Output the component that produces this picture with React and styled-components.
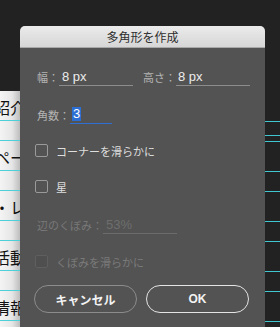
import styled, { createGlobalStyle } from "styled-components";

const GlobalStyle = createGlobalStyle`
  html, body {
    margin: 0;
    padding: 0;
    background: #222222;
    overflow: hidden;
  }
  body {
    font-family: "Liberation Sans", "Noto Sans CJK JP", sans-serif;
  }
`;

const Screen = styled.div`
  display: flex;
  width: 280px;
  height: 327px;
  overflow: hidden;
  background: #222222;
`;

// page peeking out behind the dialog on the left
const LeftStrip = styled.div`
  width: 20px;
  flex-shrink: 0;
  padding-top: 91px;
  overflow: hidden;
`;

const Page = styled.div`
  background: linear-gradient(to right, #f4f4f4 0%, #e6e6e6 60%, #bdbdbd 100%);
  height: 100%;
`;

const PageRow = styled.div`
  box-sizing: border-box;
  height: ${(p) => p.$h}px;
  border-bottom: 1px solid #4fd0d8;
  display: flex;
  align-items: center;
  padding-top: 3px;
  margin-left: -6px;
  font-family: "Noto Sans CJK JP", sans-serif;
  font-size: 16px;
  color: #111;
  white-space: nowrap;
  line-height: 1;
`;

const RightStrip = styled.div`
  flex: 1;
  overflow: hidden;
`;

const DarkRow = styled.div`
  box-sizing: border-box;
  height: ${(p) => p.$h}px;
  border-bottom: 1px solid #3fc6cf;
`;

const Dialog = styled.div`
  width: 245px;
  flex-shrink: 0;
  margin-top: 26px;
  background: #535353;
  border-radius: 5px 5px 0 0;
  display: flex;
  flex-direction: column;
`;

const TitleBar = styled.div`
  height: 21px;
  border-radius: 5px 5px 0 0;
  background: linear-gradient(to bottom, #ebebeb, #d6d6d6);
  border-bottom: 1px solid #a8a8a8;
  display: flex;
  align-items: center;
  justify-content: center;
  font-family: "Noto Sans CJK JP", sans-serif;
  font-size: 12px;
  color: #2e2e2e;
`;

const Body = styled.div`
  padding: 0 16px 0 17px;
  display: flex;
  flex-direction: column;
`;

const Row = styled.div`
  display: flex;
  align-items: flex-end;
  margin-top: ${(p) => p.$mt}px;
  gap: ${(p) => p.$gap || 0}px;
`;

const FieldGroup = styled.div`
  display: flex;
  align-items: flex-end;
`;

const Label = styled.span`
  font-family: "Noto Sans CJK JP", sans-serif;
  font-size: 11px;
  line-height: 18px;
  color: ${(p) => (p.$disabled ? "#787878" : "#b4b4b4")};
  white-space: nowrap;
`;

const Field = styled.div`
  box-sizing: border-box;
  width: ${(p) => p.$w}px;
  height: 19px;
  padding: 0 0 0 ${(p) => p.$pl ?? 3}px;
  border-bottom: 1px solid
    ${(p) => (p.$focus ? "#2f6fd3" : p.$disabled ? "#6c6c6c" : "#8c8c8c")};
  display: flex;
  align-items: center;
  font-size: 13px;
  color: ${(p) => (p.$disabled ? "#6e6e6e" : "#ececec")};
`;

const Selected = styled.span`
  background: #2d6ed2;
  color: #ffffff;
  padding: 0 1px;
  line-height: 14px;
`;

const CheckRow = styled.label`
  display: flex;
  align-items: center;
  margin-top: ${(p) => p.$mt}px;
  margin-left: -2px;
  gap: 8px;
  height: 13px;
`;

const Box = styled.span`
  box-sizing: border-box;
  width: 13px;
  height: 13px;
  border-radius: 2px;
  border: 1px solid ${(p) => (p.$disabled ? "#5f5f5f" : "#9a9a9a")};
  background: ${(p) => (p.$disabled ? "#4f4f4f" : "transparent")};
`;

const CheckText = styled.span`
  font-family: "Noto Sans CJK JP", sans-serif;
  font-size: 11px;
  color: ${(p) => (p.$disabled ? "#7a7a7a" : "#dedede")};
`;

const Buttons = styled.div`
  display: flex;
  gap: 9px;
  margin-top: 17px;
  margin-left: -3px;
`;

const Button = styled.button`
  box-sizing: border-box;
  width: 103px;
  height: 28px;
  border-radius: 14px;
  background: transparent;
  border: 1px solid ${(p) => (p.$primary ? "#e4e4e4" : "#8c8c8c")};
  color: #f2f2f2;
  font-family: "Liberation Sans", "Noto Sans CJK JP", sans-serif;
  font-size: 12px;
  font-weight: 700;
  padding: 0;
`;

const leftRows = [
  { h: 30, t: "紹介" },
  { h: 20 },
  { h: 30, t: "ペー" },
  { h: 20 },
  { h: 30, t: "・レ" },
  { h: 20 },
  { h: 30, t: "活動" },
  { h: 20 },
  { h: 30, t: "情報" },
  { h: 20 },
];

const rightLines = [121, 135, 141, 171, 191, 221, 241, 271, 291, 321];

export default function App() {
  return (
    <>
      <GlobalStyle />
      <Screen>
        <LeftStrip>
          <Page>
            {leftRows.map((r, i) => (
              <PageRow key={i} $h={r.h}>
                {r.t}
              </PageRow>
            ))}
          </Page>
        </LeftStrip>

        <Dialog>
          <TitleBar>多角形を作成</TitleBar>
          <Body>
            <Row $mt={19} $gap={10}>
              <FieldGroup>
                <Label>幅：</Label>
                <Field $w={74}>8 px</Field>
              </FieldGroup>
              <FieldGroup>
                <Label>高さ：</Label>
                <Field $w={74} $pl={2}>8 px</Field>
              </FieldGroup>
            </Row>
            <Row $mt={19}>
              <FieldGroup>
                <Label>角数：</Label>
                <Field $w={42} $pl={2} $focus>
                  <Selected>3</Selected>
                </Field>
              </FieldGroup>
            </Row>
            <CheckRow $mt={20}>
              <Box />
              <CheckText>コーナーを滑らかに</CheckText>
            </CheckRow>
            <CheckRow $mt={23}>
              <Box />
              <CheckText>星</CheckText>
            </CheckRow>
            <Row $mt={22}>
              <FieldGroup>
                <Label $disabled>辺のくぼみ：</Label>
                <Field $w={74} $disabled>53%</Field>
              </FieldGroup>
            </Row>
            <CheckRow $mt={21}>
              <Box $disabled />
              <CheckText $disabled>くぼみを滑らかに</CheckText>
            </CheckRow>
            <Buttons>
              <Button>キャンセル</Button>
              <Button $primary>OK</Button>
            </Buttons>
          </Body>
        </Dialog>

        <RightStrip>
          {rightLines.map((y, i) => (
            <DarkRow key={i} $h={i === 0 ? y + 1 : y - rightLines[i - 1]} />
          ))}
        </RightStrip>
      </Screen>
    </>
  );
}
